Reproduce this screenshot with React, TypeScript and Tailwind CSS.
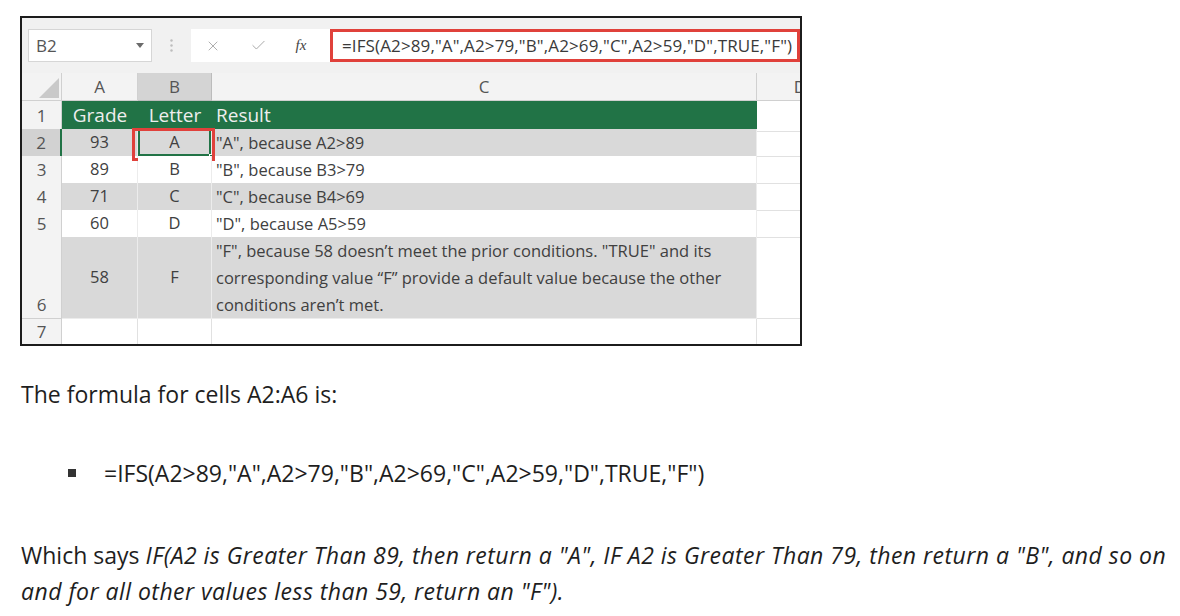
import React from 'react';
import { X, Check } from 'lucide-react';

type Row = { n: string; a: string; b: string; c: string[]; shade: boolean; tall?: boolean };

const rows: Row[] = [
  { n: '2', a: '93', b: 'A', c: ['"A", because A2>89'], shade: true },
  { n: '3', a: '89', b: 'B', c: ['"B", because B3>79'], shade: false },
  { n: '4', a: '71', b: 'C', c: ['"C", because B4>69'], shade: true },
  { n: '5', a: '60', b: 'D', c: ['"D", because A5>59'], shade: false },
  {
    n: '6',
    a: '58',
    b: 'F',
    c: [
      '"F", because 58 doesn\u2019t meet the prior conditions. "TRUE" and its',
      'corresponding value \u201cF\u201d provide a default value because the other',
      'conditions aren\u2019t met.',
    ],
    shade: true,
    tall: true,
  },
];

const formula = '=IFS(A2>89,"A",A2>79,"B",A2>69,"C",A2>59,"D",TRUE,"F")';

const cols = 'grid grid-cols-[40px_76px_74px_545px_86px]';

const SheetShot: React.FC = () => {
  return (
    <div className="w-[782px] h-[330px] border-2 border-[#1c1c1c] bg-[#f1f1f1] overflow-hidden font-['Open_Sans',sans-serif]">
      {/* formula bar */}
      <div className="flex items-start h-[55px] pt-[11px] pl-[6px]">
        <div className="flex items-center justify-between w-[124px] h-[33px] bg-white border border-[#d6d6d6] pl-[7px] pr-[7px]">
          <span className="text-[17px] text-[#555]">B2</span>
          <svg width="8" height="5" viewBox="0 0 8 5">
            <polygon points="0,0 8,0 4,5" fill="#6b6b6b" />
          </svg>
        </div>
        <div className="flex items-center justify-center w-[39px] h-[33px]">
          <svg width="3" height="13" viewBox="0 0 3 13">
            <circle cx="1.5" cy="1.5" r="1.2" fill="#bdbdbd" />
            <circle cx="1.5" cy="6.5" r="1.2" fill="#bdbdbd" />
            <circle cx="1.5" cy="11.5" r="1.2" fill="#bdbdbd" />
          </svg>
        </div>
        <div className="flex items-center w-[609px] h-[33px] bg-white">
          <div className="flex items-center justify-center w-[44px]">
            <X size={16} strokeWidth={1.4} color="#a8a8a8" />
          </div>
          <div className="flex items-center justify-center w-[46px]">
            <Check size={17} strokeWidth={1.4} color="#a8a8a8" />
          </div>
          <div className="flex items-center justify-center w-[40px]">
            <span className="font-['Liberation_Serif',serif] italic text-[15px] text-[#444]">fx</span>
          </div>
          <div className="flex items-center w-[470px] h-[33px] border-[3px] border-[#e0413b] pl-[9px] ml-[9px]">
            <span className="text-[17px] tracking-[0.12px] text-[#3a3a3a] whitespace-nowrap">{formula}</span>
          </div>
        </div>
      </div>

      {/* grid */}
      <div className="bg-white">
        {/* column headers */}
        <div className={`${cols} h-[28px] bg-[#f3f3f3] text-[17px] text-[#555]`}>
          <div className="flex items-end justify-end pr-[2px] pb-[2px] border-r border-b border-[#d0d0d0]">
            <svg width="20" height="20" viewBox="0 0 20 20">
              <polygon points="20,0 20,20 0,20" fill="#c9c9c9" />
            </svg>
          </div>
          <div className="flex items-center justify-center border-r border-b border-[#d0d0d0]">A</div>
          <div className="flex items-center justify-center bg-[#d4d4d4] border-r border-b border-[#bcbcbc]">B</div>
          <div className="flex items-center justify-center border-r border-b border-[#d0d0d0]">C</div>
          <div className="flex items-center justify-center border-b border-[#d0d0d0]">D</div>
        </div>

        {/* header row 1 */}
        <div className={`${cols} h-[28px]`}>
          <div className="flex items-center justify-center bg-[#f3f3f3] border-r border-b border-[#d0d0d0] text-[17px] text-[#555]">1</div>
          <div className="col-span-3 grid grid-cols-[76px_74px_545px] bg-[#217346] border-b-2 border-[#111] text-[19px] text-[#eeeeee]">
            <div className="flex items-center justify-center">Grade</div>
            <div className="flex items-center justify-center">Letter</div>
            <div className="flex items-center pl-[4px]">Result</div>
          </div>
          <div className="border-b border-[#e1e1e1]" />
        </div>

        {rows.map((r) => {
          const bg = r.shade ? 'bg-[#d9d9d9]' : 'bg-white';
          const sel = r.n === '2';
          return (
            <div key={r.n} className={`${cols} ${r.tall ? 'h-[82px]' : 'h-[27px]'} text-[16.5px] text-[#404040]`}>
              <div
                className={`flex justify-center border-b border-[#d0d0d0] text-[17px] text-[#555] ${
                  r.tall ? 'items-end pb-[1px]' : 'items-center'
                } ${sel ? 'bg-[#d2d2d2] border-r-2 border-r-[#217346]' : 'bg-[#f3f3f3] border-r border-r-[#d0d0d0]'}`}
              >
                {r.n}
              </div>
              <div className={`flex items-center justify-center border-r border-b border-[#ececec] ${bg}`}>{r.a}</div>
              <div className={`relative flex items-center justify-center border-r border-b border-[#ececec] ${bg}`}>
                {r.b}
                {sel && (
                  <>
                    <div className="absolute inset-0 border-2 border-[#217346]" />
                    <div className="absolute right-[-3px] bottom-[-3px] w-[5px] h-[5px] bg-[#217346] border border-white" />
                    <div className="absolute left-[-6px] right-[-4px] top-[-1px] bottom-[-5px] border-[3px] border-[#e0413b]" />
                  </>
                )}
              </div>
              <div className={`flex flex-col justify-center pl-[4px] border-r border-b border-[#ececec] ${bg}`}>
                {r.c.map((line) => (
                  <div key={line} className="leading-[27px] whitespace-nowrap">
                    {line}
                  </div>
                ))}
              </div>
              <div className="border-b border-[#e1e1e1]" />
            </div>
          );
        })}

        {/* row 7 */}
        <div className={`${cols} h-[25px]`}>
          <div className="flex items-center justify-center bg-[#f3f3f3] border-r border-[#d0d0d0] text-[17px] text-[#555]">7</div>
          <div className="border-r border-[#e1e1e1]" />
          <div className="border-r border-[#e1e1e1]" />
          <div className="border-r border-[#e1e1e1]" />
          <div />
        </div>
      </div>
    </div>
  );
};

const App: React.FC = () => {
  return (
    <div className="w-[1180px] h-[616px] bg-white pt-[16px] pl-[20px] text-[#1e1e1e] font-['Open_Sans',sans-serif]">
      <SheetShot />

      <p className="mt-[30px] pl-[1px] text-[23px] leading-[36px]">The formula for cells A2:A6 is:</p>

      <div className="flex items-center mt-[43px] pl-[48px] h-[36px]">
        <span className="w-[8px] h-[8px] bg-[#333]" />
        <span className="ml-[28px] text-[23px] leading-[36px]">{formula}</span>
      </div>

      <p className="mt-[46px] pl-[1px] text-[23px] leading-[36px] whitespace-nowrap">
        Which says{' '}
        <em className="tracking-[0.47px]">
          IF(A2 is Greater Than 89, then return a "A", IF A2 is Greater Than 79, then return a "B", and so on
          <br />
          and for all other values less than 59, return an "F").
        </em>
      </p>
    </div>
  );
};

export default App;
